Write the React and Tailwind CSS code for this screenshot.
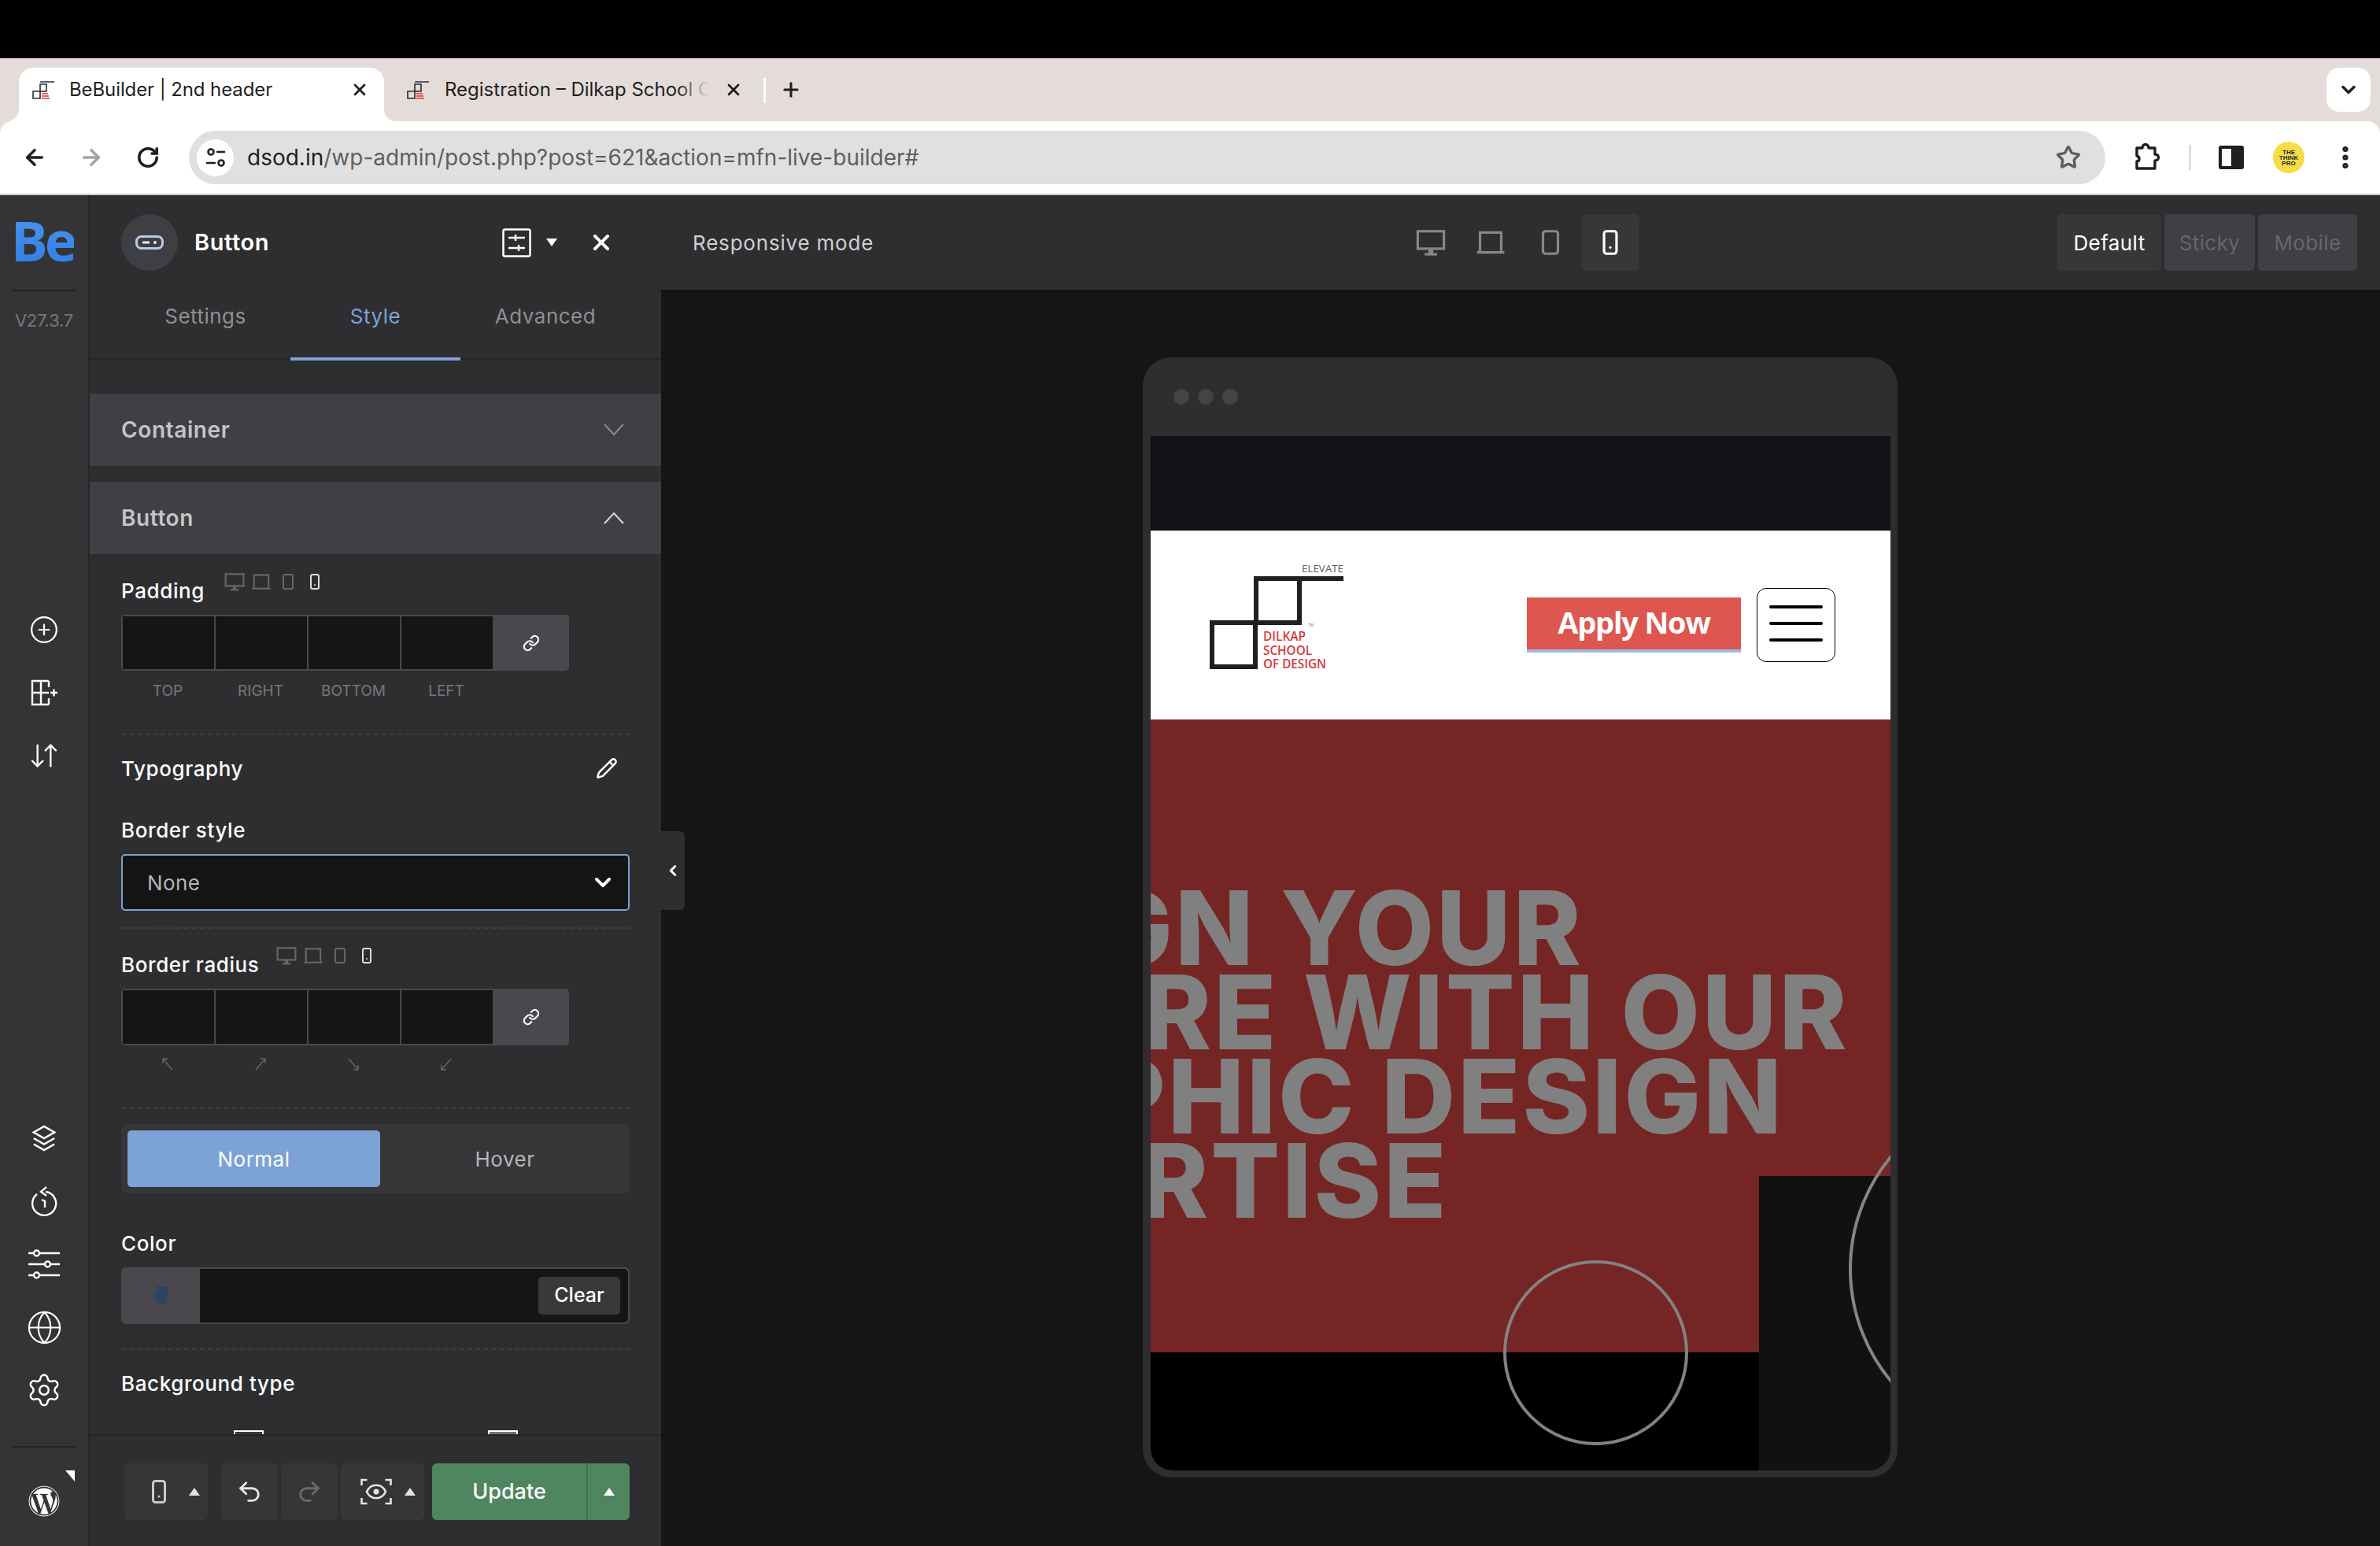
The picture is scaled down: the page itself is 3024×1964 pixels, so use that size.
import React from 'react';
import {
  ArrowLeft,
  ArrowRight,
  RotateCw,
  Star,
  EllipsisVertical,
  X,
  Plus,
  ChevronDown,
  ChevronLeft,
  CirclePlus,
  ArrowDownUp,
  Globe,
  Settings,
  Link,
  Pencil,
  Undo2,
  Redo2,
} from 'lucide-react';
import { FaWordpress } from 'react-icons/fa';

// small logo used by both tabs
const Favicon = () => (
  <svg width="29" height="24" viewBox="0 0 29 24" className="shrink-0">
    <path d="M1 14h9v9H1zM10 14V5h8v9h-8M10 2h18" fill="none" stroke="#2b2b2b" strokeWidth="1.6" />
    <path d="M12 17h8M12 20h9M12 23h10" stroke="#d33" strokeWidth="1.4" />
  </svg>
);

const DeviceIcon = ({ type, className }) => (
  <svg viewBox="0 0 24 24" fill="none" stroke="currentColor" strokeWidth="2" className={className}>
    {type === 'desktop' && (
      <>
        <rect x="1.5" y="3" width="21" height="14" />
        <path d="M12 17v4" strokeWidth="4" />
        <path d="M7 21.5h10" />
      </>
    )}
    {type === 'laptop' && (
      <>
        <path d="M3.5 19V4h17v15" />
        <path d="M1 20h22" />
      </>
    )}
    {type === 'tablet' && <rect x="6" y="3" width="12" height="18" rx="2" />}
    {type === 'mobile' && (
      <>
        <rect x="7" y="3" width="10" height="18" rx="2" />
        <circle cx="12" cy="16" r="1" fill="currentColor" stroke="none" />
      </>
    )}
  </svg>
);

const Caret = ({ up, className }) => (
  <svg width="14" height="10" viewBox="0 0 14 10" className={className}>
    <path d={up ? 'M7 0l7 10H0z' : 'M7 10L0 0h14z'} fill="currentColor" />
  </svg>
);

const Chevron = ({ up, className }) => (
  <svg width="28" height="16" viewBox="0 0 28 16" fill="none" stroke="currentColor" strokeWidth="2" className={className}>
    <path d={up ? 'M2 15L14 2l12 13' : 'M2 1l12 13L26 1'} />
  </svg>
);

const Dashed = ({ className }) => <div className={`border-t-2 border-dashed border-[#3d3d40] ${className}`} />;

const PanelLabel = ({ children, className }) => (
  <div className={`h-[34px] pb-[2px] flex items-center text-[26px] font-medium tracking-[0.6px] text-white ${className}`}>{children}</div>
);

const ResponsiveLabel = ({ label, width, className }) => (
  <div className={`h-[34px] flex text-[26px] font-medium tracking-[0.6px] text-white ${className}`}>
    <span className={`leading-[34px] ${width}`}>{label}</span>
    <div className="flex gap-[10px] -mt-[10px] h-[30px] text-[#66666a]">
      <DeviceIcon type="desktop" className="w-[26px] h-[30px] -mx-px" />
      <DeviceIcon type="laptop" className="w-[26px] h-[30px] -mx-px" />
      <DeviceIcon type="tablet" className="w-[24px] h-[30px]" />
      <DeviceIcon type="mobile" className="w-[24px] h-[30px] text-[#dcdcdc]" />
    </div>
  </div>
);

const FourInputs = ({ className }) => (
  <div className={`w-[569px] flex rounded-[5px] overflow-hidden bg-[#4a484d] ${className}`}>
    <div className="w-[470px] m-[2px] mr-0 grid grid-cols-4 gap-[2px] bg-[#4a484d]">
      <div className="bg-[#151515]" />
      <div className="bg-[#151515]" />
      <div className="bg-[#151515]" />
      <div className="bg-[#151515]" />
    </div>
    <div className="flex-1 flex items-center justify-center text-white">
      <Link size={22} strokeWidth={2.4} />
    </div>
  </div>
);

const CornerArrow = ({ d }) => (
  <svg width="18" height="16" viewBox="0 0 18 16" fill="none" stroke="#66666a" strokeWidth="1.5">
    <path d={d} />
  </svg>
);

const RailIcon = ({ children }) => <div className="h-20 flex items-center justify-center text-white">{children}</div>;

const Rail = () => (
  <div className="w-[114px] shrink-0 h-full bg-[#343437] border-r-2 border-[#28282a] flex flex-col items-center">
    <div className="w-20 h-[122px] border-b-2 border-[#232325] flex items-center justify-center pb-[6px]">
      <span className="font-['Open_Sans',sans-serif] text-[70px] font-bold tracking-[-4px] leading-none bg-gradient-to-b from-[#4a94ea] to-[#2f7fe6] bg-clip-text text-transparent -ml-[4px]">
        Be
      </span>
    </div>
    <div className="mt-[23px] h-[28px] leading-[28px] text-[22px] text-[#77777b] tracking-[-0.2px]">V27.3.7</div>
    <div className="mt-[339px] w-full">
      <RailIcon>
        <CirclePlus size={38} strokeWidth={1.4} />
      </RailIcon>
      <RailIcon>
        <svg width="36" height="34" viewBox="0 0 36 34" fill="none" stroke="currentColor" strokeWidth="2.4">
          <path d="M24 2H3v30h21M3 17h21M14 2v30M24 2v8M24 24v8M26 17h9M30.500 12.500v9" />
        </svg>
      </RailIcon>
      <RailIcon>
        <ArrowDownUp size={40} strokeWidth={1.4} />
      </RailIcon>
    </div>
    <div className="mt-[406px] w-full">
      <RailIcon>
        <svg width="34" height="34" viewBox="0 0 36 36" fill="none" stroke="currentColor" strokeWidth="2.6">
          <path d="M18 2l14 8-14 8-14-8zM4 18l14 8 14-8M4 26l14 8 14-8" />
        </svg>
      </RailIcon>
      <RailIcon>
        <svg width="36" height="38" viewBox="0 0 36 38" fill="none" stroke="currentColor" strokeWidth="2.4">
          <path d="M20 7a15 15 0 1 1-11 3M21 1l-7 6 7 5M15 17l4 2v8" />
        </svg>
      </RailIcon>
      <RailIcon>
        <svg width="42" height="38" viewBox="0 0 42 38" fill="none" stroke="currentColor" strokeWidth="2.4">
          <path d="M1 5h7M15 5h26M1 19h21M29 19h12M1 33h7M15 33h26" />
          <circle cx="11.500" cy="5" r="3.500" />
          <circle cx="25.500" cy="19" r="3.500" />
          <circle cx="11.500" cy="33" r="3.500" />
        </svg>
      </RailIcon>
      <RailIcon>
        <Globe size={47} strokeWidth={1.1} />
      </RailIcon>
      <RailIcon>
        <Settings size={46} strokeWidth={1.3} />
      </RailIcon>
    </div>
    <div className="mt-[31px] w-20 h-[2px] bg-[#232325]" />
    <div className="relative mt-[28px] w-full">
      <RailIcon>
        <FaWordpress size={40} />
      </RailIcon>
      <div className="absolute top-[1px] right-[17px] w-0 h-0 border-t-[14px] border-t-white border-l-[12px] border-l-transparent" />
    </div>
  </div>
);

const TopBar = () => (
  <div className="h-[120px] shrink-0 bg-[#2e2e30] flex items-center text-white">
    <div className="w-[726px] shrink-0 flex items-center pl-10 pr-[60px]">
      <div className="w-[72px] h-[72px] rounded-full bg-[#3f3f43] flex items-center justify-center">
        <svg width="36" height="18" viewBox="0 0 36 18" fill="none">
          <rect x="1.500" y="1.500" width="33" height="15" rx="6" stroke="#b9c8e6" strokeWidth="3" />
          <path d="M9 9h9" stroke="#e8edf7" strokeWidth="3" />
          <circle cx="25" cy="9" r="2" fill="#e8edf7" />
        </svg>
      </div>
      <span className="ml-[21px] text-[29px] font-semibold tracking-[0.6px]">Button</span>
      <svg width="37" height="37" viewBox="0 0 37 37" fill="none" stroke="#fff" strokeWidth="2.500" className="ml-auto">
        <rect x="1.500" y="1.500" width="34" height="34" rx="2" />
        <path d="M8 12h21M17 8v8M8 25h21M21 21v8" />
      </svg>
      <Caret className="ml-[19px] text-white" />
      <X size={32} strokeWidth={3} className="ml-[40px]" />
    </div>
    <div className="w-[942px] shrink-0 pl-10 text-[26px] tracking-[0.8px] text-[#cfcfd2]">Responsive mode</div>
    <div className="flex gap-1 text-[#87878b]">
      <div className="w-[72px] h-[72px] flex items-center justify-center">
        <DeviceIcon type="desktop" className="w-[38px] h-[38px]" />
      </div>
      <div className="w-[72px] h-[72px] flex items-center justify-center">
        <DeviceIcon type="laptop" className="w-[38px] h-[38px]" />
      </div>
      <div className="w-[72px] h-[72px] flex items-center justify-center">
        <DeviceIcon type="tablet" className="w-[38px] h-[38px]" />
      </div>
      <div className="w-[72px] h-[72px] rounded-[6px] bg-[#37373a] text-white flex items-center justify-center">
        <DeviceIcon type="mobile" className="w-[38px] h-[38px]" />
      </div>
    </div>
    <div className="ml-auto mr-[29px] flex gap-1 text-[26px] tracking-[0.4px]">
      <div className="w-[132px] h-[72px] rounded-[6px] bg-[#37373a] flex items-center justify-center">Default</div>
      <div className="w-[115px] h-[72px] rounded-[6px] bg-[#3f3f44] text-[#66666b] flex items-center justify-center">Sticky</div>
      <div className="w-[126px] h-[72px] rounded-[6px] bg-[#3f3f44] text-[#66666b] flex items-center justify-center">Mobile</div>
    </div>
  </div>
);

const SidePanel = () => (
  <div className="w-[726px] shrink-0 h-full flex flex-col bg-[#2e2e30]">
    <div className="h-[89px] shrink-0 border-b-2 border-[#252527] pl-[39px] flex text-[26px] tracking-[0.5px] text-[#8f8f93]">
      <div className="w-[216px] pt-[14px] text-center">Settings</div>
      <div className="w-[216px] h-[90px] pt-[14px] text-center text-[#7ca2d6] border-b-[4px] border-[#7ca2d6]">Style</div>
      <div className="w-[216px] pt-[14px] text-center">Advanced</div>
    </div>

    <div className="flex-1 overflow-hidden">
      <div className="mt-[43px] h-[92px] bg-[#3f3f44] pl-10 pr-[46px] flex items-center justify-between text-[28px] font-semibold tracking-[0.6px] text-[#c4c4c8]">
        Container
        <Chevron className="text-[#8d8d91]" />
      </div>
      <div className="mt-5 h-[92px] bg-[#3f3f44] pl-10 pr-[46px] flex items-center justify-between text-[28px] font-semibold tracking-[0.6px] text-[#c4c4c8]">
        Button
        <Chevron up className="text-[#d8d8da]" />
      </div>

      <div className="px-10">
        <ResponsiveLabel label="Padding" width="w-[132px]" className="mt-[30px]" />
        <FourInputs className="mt-[13px] h-[71px]" />
        <div className="mt-[14px] w-[472px] grid grid-cols-4 h-6 text-[19px] text-[#77777b] text-center leading-6">
          <span>TOP</span>
          <span>RIGHT</span>
          <span>BOTTOM</span>
          <span>LEFT</span>
        </div>
        <Dashed className="mt-[42px]" />

        <PanelLabel className="mt-[26px] justify-between pr-[15px]">
          Typography
          <Pencil size={28} strokeWidth={2.1} />
        </PanelLabel>

        <PanelLabel className="mt-[44px]">Border style</PanelLabel>
        <div className="mt-[13px] h-[72px] rounded-[5px] border-2 border-[#7ca2d6] bg-[#151515] pl-[31px] pr-[16px] flex items-center justify-between text-[26px] tracking-[0.4px] text-[#b5b4ba]">
          None
          <ChevronDown size={32} strokeWidth={3} className="text-white" />
        </div>
        <Dashed className="mt-[21px]" />

        <ResponsiveLabel label="Border radius" width="w-[198px]" className="mt-[29px]" />
        <FourInputs className="mt-[13px] h-[72px]" />
        <div className="mt-3 w-[472px] grid grid-cols-4 h-6 justify-items-center items-center">
          <CornerArrow d="M3 1l12 14M3 1v6M3 1h6" />
          <CornerArrow d="M15 1L3 15M15 1v6M15 1H9" />
          <CornerArrow d="M3 1l12 14M15 15V9M15 15H9" />
          <CornerArrow d="M15 1L3 15M3 15V9M3 15h6" />
        </div>
        <Dashed className="mt-[43px]" />

        <div className="mt-[19px] h-[88px] rounded-[6px] bg-[#363638] py-2 pl-2 flex text-[26px] tracking-[0.5px]">
          <div className="w-[321px] rounded-[5px] bg-[#7ca2d6] text-white flex items-center justify-center">Normal</div>
          <div className="flex-1 text-[#b5b4ba] flex items-center justify-center">Hover</div>
        </div>

        <PanelLabel className="mt-[47px]">Color</PanelLabel>
        <div className="mt-[13px] h-[72px] rounded-[6px] bg-[#4a484d] flex overflow-hidden">
          <div className="w-[100px] flex items-center justify-center">
            <svg width="24" height="24" viewBox="0 0 26 36" preserveAspectRatio="none">
              <path d="M6 3a9 3 0 0 1 18 0l-2 28a7 3 0 0 1-14 0l-1-6a6 6 0 0 1-5-7 6 6 0 0 1 5-5z" fill="#2c4560" />
            </svg>
          </div>
          <div className="flex-1 m-[2px] ml-0 rounded-r-[5px] bg-[#151515] flex items-center justify-end pr-[10px]">
            <div className="w-[104px] h-[48px] rounded-[5px] bg-[#39393b] text-white text-[25px] font-medium flex items-center justify-center">Clear</div>
          </div>
        </div>
        <Dashed className="mt-[31px]" />

        <PanelLabel className="mt-[26px]">Background type</PanelLabel>
        <div className="mt-[42px] flex">
          <div className="ml-[143px] w-[38px] h-[30px] border-2 border-white bg-[#3a3a3c]" />
          <div className="ml-[285px] w-[38px] h-[30px] border-2 border-white bg-gradient-to-b from-[#777] to-[#2e2e30]" />
        </div>
      </div>
    </div>

    <div className="h-[142px] shrink-0 border-t-2 border-[#252527] pt-[35px] pl-[44px] flex text-white">
      <div className="w-[106px] h-[72px] rounded-[6px] bg-[#363638] flex items-center pl-[26px] text-[#e4e4e4]">
        <DeviceIcon type="mobile" className="w-[36px] h-[36px] text-[#c9c9cc]" />
        <Caret up className="ml-[20px]" />
      </div>
      <div className="ml-[17px] w-[72px] h-[72px] rounded-[6px] bg-[#363638] flex items-center justify-center">
        <Undo2 size={34} strokeWidth={2} className="text-[#e4e4e4]" />
      </div>
      <div className="ml-1 w-[72px] h-[72px] rounded-[6px] bg-[#363638] flex items-center justify-center">
        <Redo2 size={34} strokeWidth={2} className="text-[#69696d]" />
      </div>
      <div className="ml-1 w-[106px] h-[72px] rounded-[6px] bg-[#363638] flex items-center pl-[25px]">
        <svg width="40" height="34" viewBox="0 0 40 34" fill="none" stroke="#e4e4e4" strokeWidth="2.600">
          <path d="M1.500 9V2h7M31.500 2h7v7M38.500 25v7h-7M8.500 32h-7v-7" />
          <path d="M8 17c5-11 19-11 24 0-5 11-19 11-24 0z" />
          <circle cx="20" cy="17" r="3.500" fill="#e4e4e4" stroke="none" />
        </svg>
        <Caret up className="ml-[16px] text-[#e4e4e4]" />
      </div>
      <div className="ml-[10px] w-[251px] h-[72px] rounded-[6px] bg-[#4f855f] flex">
        <div className="w-[198px] border-r-2 border-[#427450] flex items-center justify-center text-[27px] font-medium">Update</div>
        <div className="flex-1 flex items-center justify-center">
          <Caret up />
        </div>
      </div>
    </div>
  </div>
);

const DilkapLogo = () => (
  <svg width="172" height="136" viewBox="0 0 172 136" className="ml-[75px] mt-[41px] shrink-0">
    <g fill="none" stroke="#231f20" strokeWidth="6">
      <rect x="3" y="76" width="55" height="56" />
      <rect x="59" y="20" width="55" height="56" />
      <path d="M56 20h114" />
    </g>
    <g fontFamily="'Open Sans', sans-serif">
      <text x="117" y="12" fontSize="12" fill="#58585a" textLength="53" lengthAdjust="spacingAndGlyphs">ELEVATE</text>
      <text x="125" y="81" fontSize="5" fill="#777">TM</text>
      <g fontSize="15.500" fontWeight="600" fill="#d6383a">
        <text x="68" y="99" textLength="54" lengthAdjust="spacingAndGlyphs">DILKAP</text>
        <text x="68" y="117" textLength="62" lengthAdjust="spacingAndGlyphs">SCHOOL</text>
        <text x="68" y="134" textLength="80" lengthAdjust="spacingAndGlyphs">OF DESIGN</text>
      </g>
    </g>
  </svg>
);

const DevicePreview = () => (
  <div className="ml-[612px] mt-[86px] w-[959px] h-[1423px] rounded-[36px] bg-[#2e2e30] pl-[10px] pr-[9px] pb-[9px] flex flex-col">
    <div className="h-[100px] shrink-0 pl-[29px] flex items-center gap-[11px]">
      <div className="w-5 h-5 rounded-full bg-[#444447]" />
      <div className="w-5 h-5 rounded-full bg-[#444447]" />
      <div className="w-5 h-5 rounded-full bg-[#444447]" />
    </div>
    <div className="flex-1 flex flex-col rounded-b-[28px] overflow-hidden">
      <div className="h-[120px] shrink-0 bg-[#121216]" />
      <div className="h-[240px] shrink-0 bg-white flex items-start">
        <DilkapLogo />
        <div className="ml-[231px] mt-[85px] w-[272px] h-[70px] bg-[#dd5650] border-b-[4px] border-[#9dbbe3] flex items-center justify-center font-['Open_Sans',sans-serif] text-[38px] font-bold text-white tracking-[-1.200px] pb-[4px]">
          Apply Now
        </div>
        <div className="ml-5 mt-[73px] w-[100px] h-[94px] rounded-[12px] border-[1.500px] border-black flex flex-col items-center justify-center gap-[17px] pb-[4px]">
          <div className="w-[68px] h-[4px] rounded-full bg-black" />
          <div className="w-[68px] h-[4px] rounded-full bg-black" />
          <div className="w-[68px] h-[4px] rounded-full bg-black" />
        </div>
      </div>
      <div className="flex-1 relative overflow-hidden flex flex-col">
        <div className="h-[804px] shrink-0 bg-[#752624] pt-[211px]">
          <div className="-ml-[374px] whitespace-nowrap font-extrabold text-[130px] leading-[107px] text-[#808080] tracking-[3px]">
            <div className="-ml-[4px]">DESIGN YOUR</div>
            <div>FUTURE WITH OUR</div>
            <div className="ml-[15px]">GRAPHIC DESIGN</div>
            <div className="ml-[7px]">EXPERTISE</div>
          </div>
        </div>
        <div className="flex-1 bg-black" />
        <div className="absolute right-0 bottom-0 w-[167px] h-[374px] bg-[#111111]" />
        <div className="absolute left-[448px] top-[687px] w-[235px] h-[235px] rounded-full border-[4px] border-[#828282]" />
        <div className="absolute left-[887px] top-[473px] w-[450px] h-[450px] rounded-full border-[4px] border-[#858585]" />
      </div>
    </div>
  </div>
);

const BrowserChrome = () => (
  <>
    <div className="h-[74px] bg-black" />
    <div className="bg-[#e3dcd9]">
      <div className="h-[80px] flex items-end text-[24px] text-[#1f1f1f]">
        <div className="relative ml-6 w-[464px] h-[68px] bg-white rounded-t-[18px] flex items-center pl-[17px] pr-[19px] pb-[12px]">
          <div className="absolute -left-4 bottom-0 w-4 h-4 bg-[radial-gradient(circle_at_0_0,#e3dcd9_16px,#fff_16.500px)]" />
          <div className="absolute -right-4 bottom-0 w-4 h-4 bg-[radial-gradient(circle_at_100%_0,#e3dcd9_16px,#fff_16.500px)]" />
          <Favicon />
          <span className="ml-[18px] whitespace-nowrap tracking-[-0.1px]">BeBuilder | 2nd header</span>
          <X size={24} strokeWidth={2.8} className="ml-auto" />
        </div>
        <div className="ml-3 w-[464px] h-[68px] flex items-center pl-[17px] pr-5 pb-[12px]">
          <Favicon />
          <div className="relative ml-[19px] w-[335px] overflow-hidden whitespace-nowrap">
            Registration – Dilkap School Of Design
            <div className="absolute right-0 top-0 bottom-0 w-10 bg-gradient-to-r from-transparent to-[#e3dcd9]" />
          </div>
          <X size={24} strokeWidth={2.8} className="ml-auto" />
        </div>
        <div className="ml-[6px] mb-[23px] w-[3px] h-[32px] bg-white" />
        <Plus size={28} strokeWidth={2.6} className="ml-[18px] mb-[26px]" />
        <div className="ml-auto mr-3 mb-3 w-14 h-14 rounded-[16px] bg-white flex items-center justify-center">
          <ChevronDown size={28} strokeWidth={3} />
        </div>
      </div>
      <div className="h-[94px] rounded-t-[16px] bg-white border-b-2 border-[#d3d0cf] flex items-center">
        <div className="ml-2 w-[72px] flex justify-center">
          <ArrowLeft size={32} strokeWidth={2.6} className="text-[#1f1f1f]" />
        </div>
        <div className="w-[72px] flex justify-center">
          <ArrowRight size={32} strokeWidth={2.6} className="text-[#a2a2a2]" />
        </div>
        <div className="w-[72px] flex justify-center">
          <RotateCw size={30} strokeWidth={2.8} className="text-[#1f1f1f]" />
        </div>
        <div className="ml-4 w-[2435px] h-[68px] rounded-full bg-[#e0e0e0] flex items-center pl-[10px] pr-[31px]">
          <div className="w-[47px] h-[47px] rounded-full bg-white flex items-center justify-center">
            <svg width="26" height="26" viewBox="0 0 26 26" fill="none" stroke="#1f1f1f" strokeWidth="2.600">
              <circle cx="7" cy="6" r="3.500" />
              <path d="M14 6h11M1 20h12" />
              <circle cx="20" cy="20" r="3.500" />
            </svg>
          </div>
          <span className="ml-[17px] text-[28px] text-[#5d5f62] whitespace-nowrap">
            <span className="text-[#1f1f1f]">dsod.in</span>/wp-admin/post.php?post=621&amp;action=mfn-live-builder#
          </span>
          <Star size={32} strokeWidth={2.6} className="ml-auto text-[#5d5f62]" />
        </div>
        <svg width="40" height="40" viewBox="0 0 40 40" fill="none" stroke="#1f1f1f" strokeWidth="3.400" className="ml-[33px] shrink-0">
          <path d="M7 8h7c0-6 8-6 8 0h8v8c6 0 6 8 0 8v10H7v-9c4 0 4-6 0-7z" strokeLinejoin="round" />
        </svg>
        <div className="ml-[33px] w-[3px] h-[32px] bg-[#e3dcd9]" />
        <div className="ml-[35px] w-[32px] h-[30px] rounded-[3px] border-[4px] border-[#1f1f1f] flex justify-end">
          <div className="w-[12px] bg-[#1f1f1f]" />
        </div>
        <div className="ml-[37px] w-10 h-10 rounded-full bg-[#f6dc45] flex flex-col items-center justify-center font-['Liberation_Sans',sans-serif] font-bold text-[8px] leading-[7px] text-[#1f1f1f]">
          <span>THE</span>
          <span>THINK</span>
          <span>PRO</span>
        </div>
        <EllipsisVertical size={36} strokeWidth={2.8} className="ml-[34px] text-[#1f1f1f]" />
      </div>
    </div>
  </>
);

export default function App() {
  return (
    <div className="w-[3024px] h-[1964px] overflow-hidden flex flex-col font-['Inter',sans-serif] bg-black">
      <BrowserChrome />
      <div className="flex-1 flex min-h-0">
        <Rail />
        <div className="flex-1 flex flex-col min-w-0">
          <TopBar />
          <div className="flex-1 flex min-h-0">
            <SidePanel />
            <div className="flex-1 relative bg-[#151515] overflow-hidden">
              <div className="absolute left-0 top-[688px] w-[30px] h-[100px] rounded-r-[6px] bg-[#2e2e30] flex items-center justify-center text-white">
                <ChevronLeft size={22} strokeWidth={3.2} />
              </div>
              <DevicePreview />
            </div>
          </div>
        </div>
      </div>
    </div>
  );
}
